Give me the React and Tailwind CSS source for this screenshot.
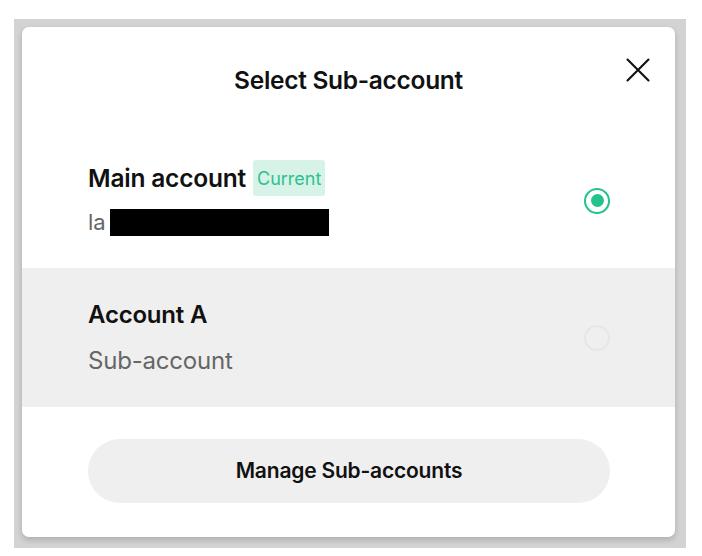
import React from "react";

const font = { fontFamily: "Inter, 'Noto Sans', sans-serif" };

const Radio = ({ checked }) =>
  checked ? (
    <div className="flex h-[26px] w-[26px] items-center justify-center rounded-full border-[2.5px] border-[#22c38e]">
      <div className="h-[13px] w-[13px] rounded-full bg-[#22c38e]" />
    </div>
  ) : (
    <div className="h-[26px] w-[26px] rounded-full border-2 border-[#e6e6e6]" />
  );

export default function App() {
  return (
    <div className="h-[556px] w-[702px] bg-white" style={font}>
      <div className="ml-[14px] pt-[19px]">
        <div className="w-[672px] bg-[#d3d3d3] pl-2 pt-2 pr-[11px] pb-[11px]">
          <div className="h-[510px] w-[653px] overflow-hidden rounded-[7px] bg-white shadow-[0_3px_6px_rgba(0,0,0,0.18)]">
            {/* header */}
            <div className="relative flex h-[102px] items-center justify-center pt-[4px]">
              <h2 className="text-[24.5px] font-semibold tracking-[-0.3px] text-[#111]">
                Select Sub-account
              </h2>
              <button className="absolute right-[25px] top-[31px] text-[#111]">
                <svg width="24" height="24" viewBox="0 0 24 24" fill="none" stroke="currentColor" strokeWidth="2.1" strokeLinecap="round">
                  <path d="M1.5 1.5L22.5 22.5M22.5 1.5L1.5 22.5" />
                </svg>
              </button>
            </div>

            {/* main account */}
            <div className="flex h-[139px] items-center justify-between pl-[66px] pr-[65px]">
              <div className="flex flex-col gap-[10px] pt-[2px]">
                <div className="flex items-center gap-[7px]">
                  <span className="text-[24.5px] font-semibold tracking-[-0.2px] text-[#111]">Main account</span>
                  <span className="flex h-[36px] items-center rounded-[3px] bg-[#d7f3e8] px-[4px] text-[18px] text-[#2cc28d]">
                    Current
                  </span>
                </div>
                <div className="flex items-center">
                  <span className="text-[22px] text-[#666]">la</span>
                  <span className="ml-[4px] h-[27px] w-[219px] bg-black" />
                </div>
              </div>
              <div className="pt-[4px]">
                <Radio checked />
              </div>
            </div>

            {/* sub account */}
            <div className="flex h-[139px] items-center justify-between bg-[#efefef] pl-[66px] pr-[65px]">
              <div className="flex flex-col gap-[10px]">
                <span className="text-[24px] font-semibold tracking-[-0.2px] text-[#111]">Account A</span>
                <span className="text-[24px] tracking-[-0.2px] text-[#666]">Sub-account</span>
              </div>
              <Radio />
            </div>

            <div className="pl-[66px] pr-[65px] pt-[32px]">
              <button className="flex h-[64px] w-full items-center justify-center rounded-full bg-[#efefef] text-[21px] font-semibold tracking-[-0.2px] text-[#111]">
                Manage Sub-accounts
              </button>
            </div>
          </div>
        </div>
      </div>
    </div>
  );
}
